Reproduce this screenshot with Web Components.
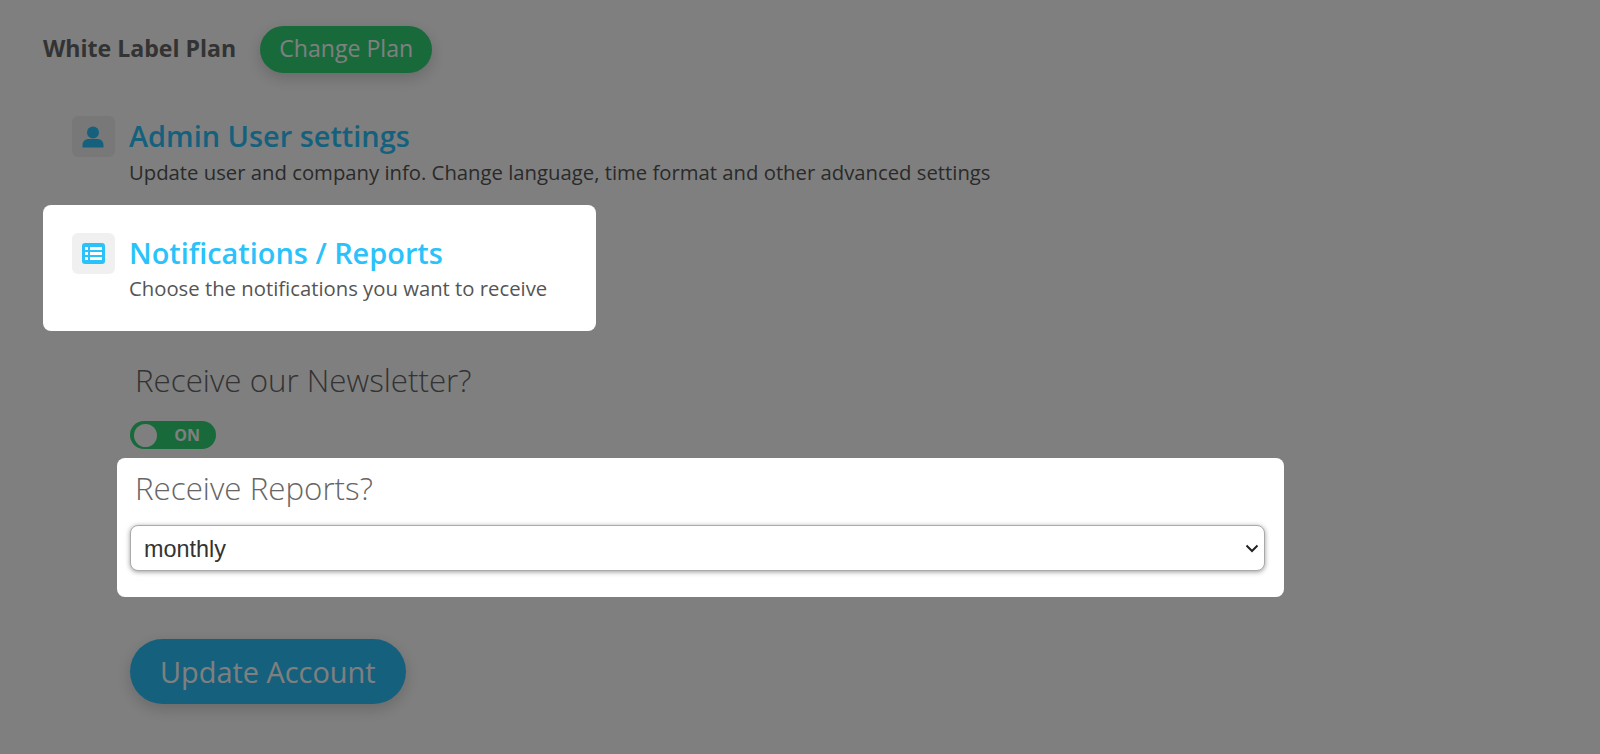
<!DOCTYPE html>
<html lang="en">
<head>
<meta charset="utf-8">
<title>Account settings</title>
<style>
  html, body { margin: 0; height: 754px; overflow: hidden; background: #fff; }
  body { font-family: "Open Sans", "Liberation Sans", sans-serif; color: #333; }
  .dim { position: fixed; inset: 0; background: rgba(0, 0, 0, 0.5); z-index: 100; }
</style>
</head>
<body>
<account-page></account-page>
<div class="dim"></div>

<script>
class PillButton extends HTMLElement {
  connectedCallback() {
    const big = this.hasAttribute("big");
    const color = this.getAttribute("color") || "#30d476";
    this.attachShadow({ mode: "open" }).innerHTML = `
      <style>
      :host {
        display: inline-flex;
        align-items: center;
        box-sizing: border-box;
        height: ${big ? 65 : 47}px;
        padding: 0 ${big ? 30 : 19}px ${big ? 0 : 4}px;
        border-radius: ${big ? 33 : 24}px;
        background: ${color};
        color: #fff;
        font-size: ${big ? 28.9 : 23.1}px;
        box-shadow: 0 5px 16px rgba(0, 0, 0, 0.18);
      }
      </style>
      <slot></slot>`;
  }
}

class IconBox extends HTMLElement {
  connectedCallback() {
    const icons = {
      user: `<circle cx="11" cy="6.5" r="6" /><path d="M.5 21.5v-2.6C.5 14.6 4 13 7 13h8c3 0 6.500 1.600 6.500 5.900v2.600z" />`,
      list: `<rect x="0" y="0" width="23" height="21" rx="3" />
        <g fill="#fff"><rect x="3" y="4" width="3" height="3" /><rect x="8" y="4" width="12" height="3" />
        <rect x="3" y="9" width="3" height="3" /><rect x="8" y="9" width="12" height="3" />
        <rect x="3" y="14" width="3" height="3" /><rect x="8" y="14" width="12" height="3" /></g>`,
    };
    const name = this.getAttribute("name");
    const box = name === "user" ? "0 0 22 22" : "0 0 23 21";
    const w = name === "user" ? 22 : 23;
    const h = name === "user" ? 22 : 21;
    this.attachShadow({ mode: "open" }).innerHTML = `
      <style>
      :host {
        display: flex;
        flex: none;
        align-items: center;
        justify-content: center;
        width: 43px;
        height: 41px;
        border-radius: 6px;
        background: #f0f0f0;
        color: #2ac2fa;
      }
      svg { fill: currentColor; display: block; margin-left: -1px; }
      </style>
      <svg width="${w}" height="${h}" viewBox="${box}">${icons[name]}</svg>`;
  }
}

class SettingsLink extends HTMLElement {
  connectedCallback() {
    this.attachShadow({ mode: "open" }).innerHTML = `
      <style>
      :host {
        display: flex;
        gap: 14px;
        align-items: flex-start;
        box-sizing: border-box;
      }
      :host([active]) {
        position: relative;
        z-index: 101;
        background: #fff;
        border-radius: 8px;
      }
      .text { display: flex; flex-direction: column; }
      .title {
        font-size: 28.9px;
        line-height: 40px;
        font-weight: 600;
        color: #2ac2fa;
      }
      .desc {
        margin-top: 2px;
        font-size: 20.3px;
        line-height: 28px;
        color: #555;
        white-space: nowrap;
      }
      :host([active]) .desc { margin-top: 1px; }
      </style>
      <icon-box name="${this.getAttribute("icon")}"></icon-box>
      <div class="text">
        <div class="title">${this.getAttribute("heading")}</div>
        <div class="desc"><slot></slot></div>
      </div>`;
  }
}

class ToggleSwitch extends HTMLElement {
  connectedCallback() {
    this.attachShadow({ mode: "open" }).innerHTML = `
      <style>
      :host {
        display: flex;
        align-items: center;
        box-sizing: border-box;
        width: 86px;
        height: 28px;
        padding: 0 16px 0 4px;
        border-radius: 14px;
        background: #30d476;
        color: #fff;
        font-size: 16px;
        font-weight: 700;
        justify-content: space-between;
      }
      .knob { width: 23px; height: 23px; border-radius: 50%; background: #fff; }
      </style>
      <span class="knob"></span><span>ON</span>`;
  }
}

class FieldGroup extends HTMLElement {
  connectedCallback() {
    this.attachShadow({ mode: "open" }).innerHTML = `
      <style>
      :host {
        display: block;
        box-sizing: border-box;
        width: 1167px;
        padding: 0 19px 0 13px;
      }
      :host([active]) {
        position: relative;
        z-index: 101;
        background: #fff;
        border-radius: 8px;
      }
      .label {
        padding-left: 5px;
        font-size: 31.3px;
        line-height: 42px;
        font-weight: 300;
        color: #666;
      }
      </style>
      <div class="label">${this.getAttribute("label")}</div>
      <slot></slot>`;
  }
}

class AccountPage extends HTMLElement {
  connectedCallback() {
    const chevron = "url(\"data:image/svg+xml,%3Csvg xmlns='http://www.w3.org/2000/svg' width='14' height='9'%3E%3Cpath d='M1.5 1.5L7 7l5.500-5.500' fill='none' stroke='%23222' stroke-width='2'/%3E%3C/svg%3E\")";
    this.attachShadow({ mode: "open" }).innerHTML = `
      <style>
      :host {
        display: flex;
        flex-direction: column;
        align-items: flex-start;
        padding: 26px 0 0 43px;
      }
      .plan { display: flex; align-items: center; gap: 24px; }
      .plan b { padding-bottom: 3px; font-size: 23.1px; font-weight: 700; color: #666; }
      settings-link[icon="user"] { margin: 43px 0 0 29px; }
      settings-link[icon="list"] {
        margin-top: 19px;
        width: 553px;
        height: 126px;
        padding: 28px 0 0 29px;
      }
      field-group { margin-left: 74px; }
      .news { margin-top: 28px; height: 91px; }
      field-group[active] { height: 139px; margin-top: 8px; padding-top: 9px; }
      toggle-switch { margin-top: 20px; }
      select {
        display: block;
        appearance: none;
        width: 100%;
        height: 46px;
        margin-top: 16px;
        padding: 2px 13px 0;
        border: 1px solid #aaa;
        border-radius: 8px;
        background: #fff ${chevron} no-repeat right 5px center;
        color: #333;
        font: 23.4px "Liberation Sans", Arial, sans-serif;
        box-shadow: 0 1px 5px rgba(0, 0, 0, 0.4);
        box-sizing: border-box;
      }
      .submit { margin: 42px 0 0 87px; }
      </style>
      <div class="plan">
        <b>White Label Plan</b>
        <pill-button color="#30d476">Change Plan</pill-button>
      </div>
      <settings-link icon="user" heading="Admin User settings">Update user and company info. Change language, time format and other advanced settings</settings-link>
      <settings-link icon="list" heading="Notifications / Reports" active>Choose the notifications you want to receive</settings-link>
      <field-group class="news" label="Receive our Newsletter?"><toggle-switch></toggle-switch></field-group>
      <field-group label="Receive Reports?" active>
        <select><option>monthly</option><option>weekly</option><option>never</option></select>
      </field-group>
      <pill-button class="submit" big color="#2ac2fa">Update Account</pill-button>`;
  }
}

customElements.define("pill-button", PillButton);
customElements.define("icon-box", IconBox);
customElements.define("settings-link", SettingsLink);
customElements.define("toggle-switch", ToggleSwitch);
customElements.define("field-group", FieldGroup);
customElements.define("account-page", AccountPage);
</script>
</body>
</html>
